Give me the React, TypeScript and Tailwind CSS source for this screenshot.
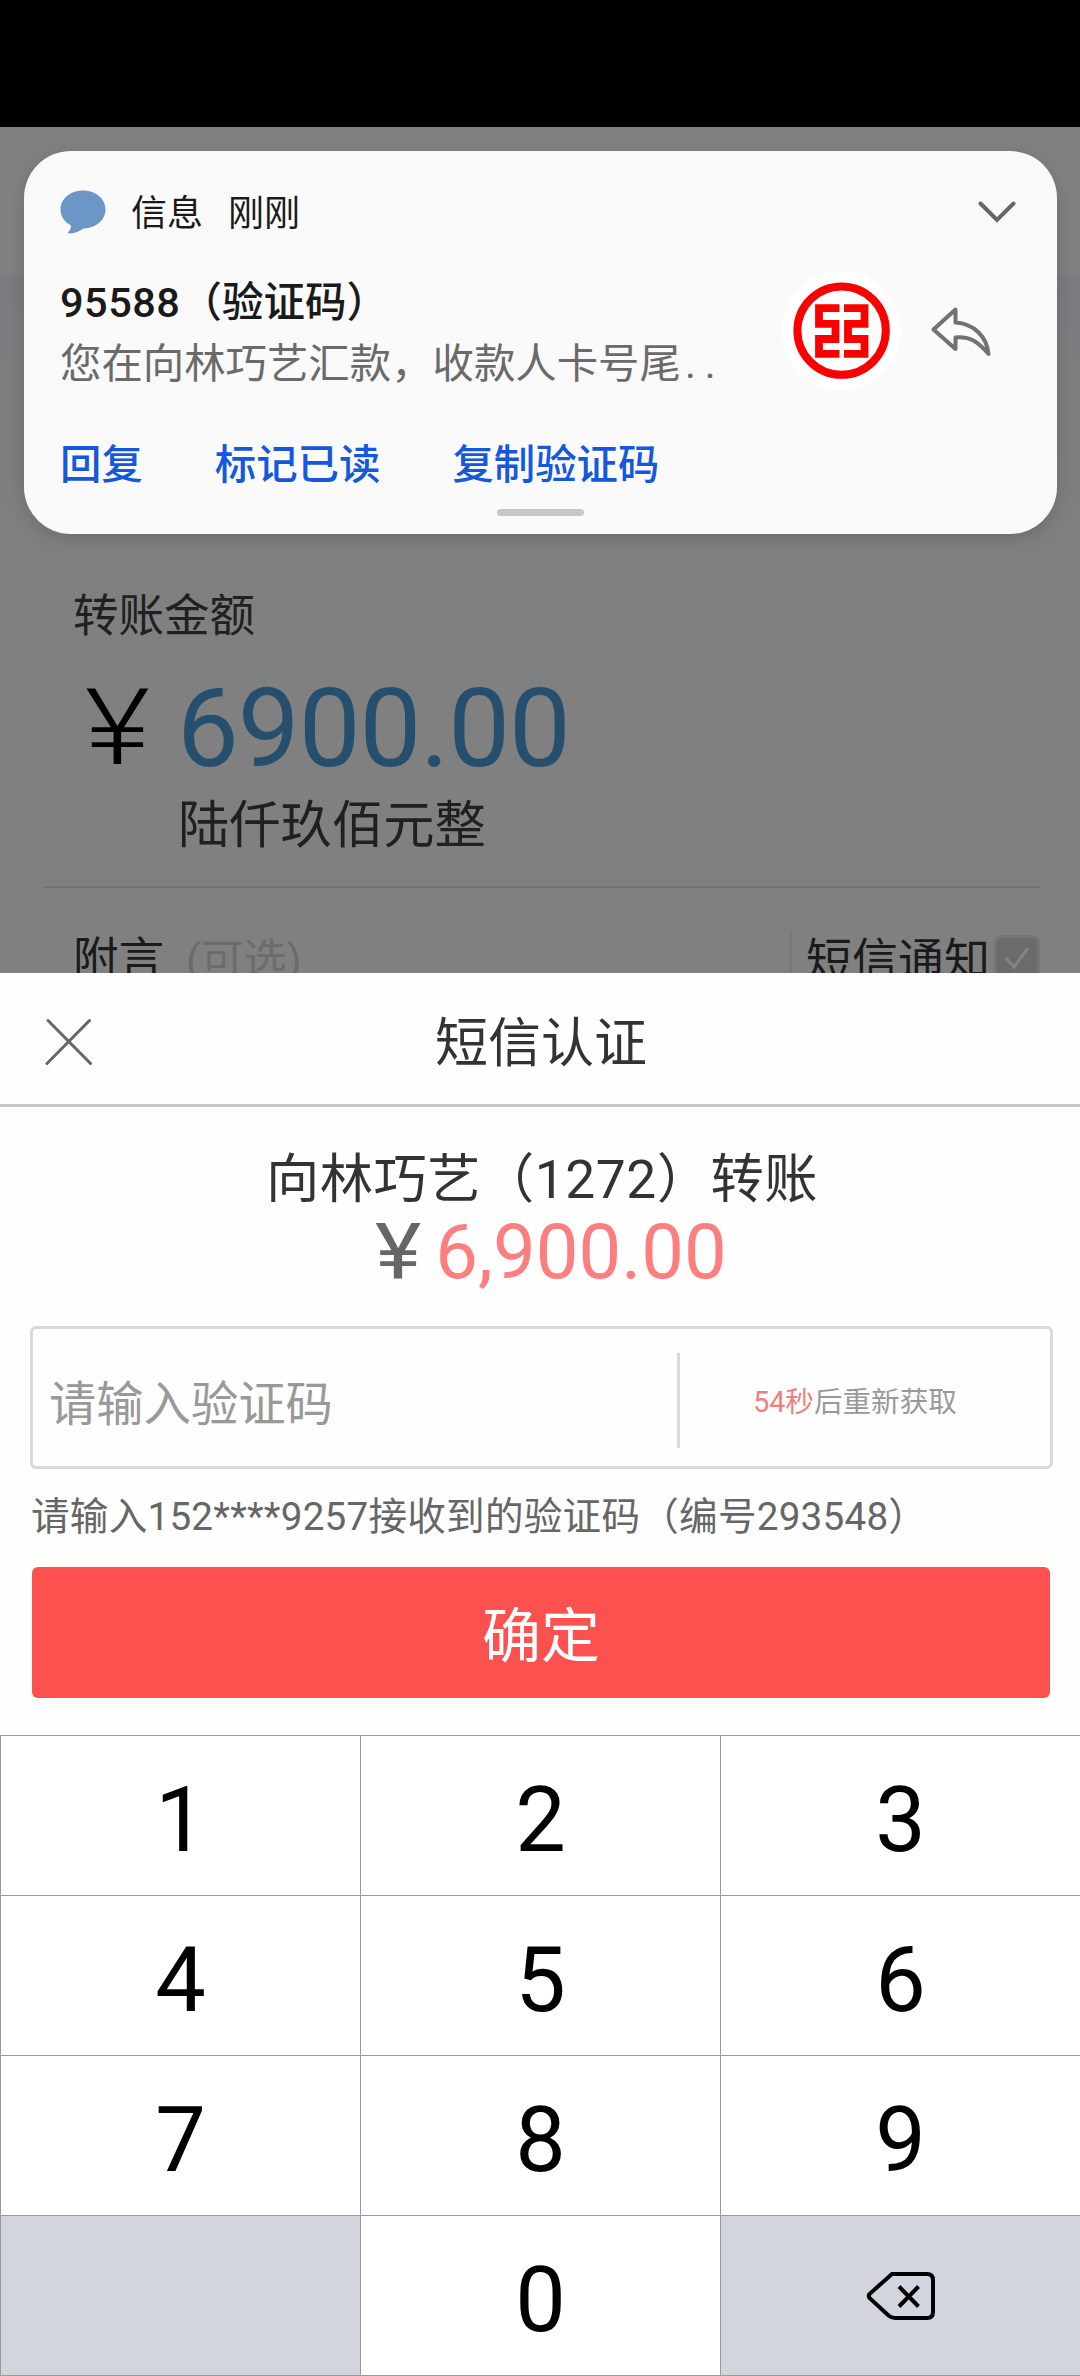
import type { ReactNode } from 'react';

function MessageIcon() {
  return (
    <svg width="46" height="44" viewBox="0 0 46 44" fill="#6b96c6">
      <path d="M23 0.500C35.700 0.500 45.500 9 45.500 19.500S36 38 23.500 38.500C19 41.500 14 43.500 9 43.500C7.500 43.500 7.500 42.800 8.500 41.800C10.300 39.800 11.200 37.800 11 35.500C4.500 32 0.500 26.500 0.500 19.500C0.500 9 10.300 0.500 23 0.500Z" />
    </svg>
  );
}

function ChevronIcon() {
  return (
    <svg width="38" height="22" viewBox="0 0 38 22" fill="none" stroke="#666666" strokeWidth="4" strokeLinecap="round">
      <path d="M2.500 2.500L19 19L35.500 2.500" />
    </svg>
  );
}

function BankLogo() {
  return (
    <svg width="119" height="119" viewBox="0 0 119 119">
      <circle cx="59.500" cy="59.500" r="59.500" fill="#ffffff" />
      <g fill="none" stroke="#fb0000">
        <circle cx="59.600" cy="59.600" r="44.200" strokeWidth="8" />
        <path strokeWidth="7.800" d="M57.500 37.200H37V52.800H53.500V68H37V82.800H57.500" />
        <path strokeWidth="7.800" d="M62 37.200H82.500V52.800H66V68H82.500V82.800H62" />
      </g>
    </svg>
  );
}

function ReplyIcon() {
  return (
    <svg width="60" height="50" viewBox="0 0 60 50" fill="none" stroke="#707273" strokeWidth="4" strokeLinejoin="round">
      <path d="M24.500 2.500L2.500 22.500L24.500 42V30.500C40 29 48 36 57.500 47C56 30 43 16.500 24.500 15.500Z" />
    </svg>
  );
}

function CloseIcon() {
  return (
    <svg width="48" height="48" viewBox="0 0 48 48" fill="none" stroke="#666666" strokeWidth="3" strokeLinecap="round">
      <path d="M3 2.500L45.500 45.500M44.500 2.500L2 45.500" />
    </svg>
  );
}

function BackspaceIcon() {
  return (
    <svg width="70" height="50" viewBox="0 0 70 50" fill="none" stroke="#000000" strokeWidth="4">
      <path d="M26 3H61Q67 3 67 9V41Q67 47 61 47H29Q25.500 47 22.500 44.500L3.500 27Q2 25 3.500 23Z" />
      <path d="M33 15.500L52.500 35.500M52.500 15.500L33 35.500" />
    </svg>
  );
}

const actions = ['回复', '标记已读', '复制验证码'];

function Notification() {
  return (
    <div className="absolute left-6 top-[151px] flex h-[383px] w-[1033px] flex-col rounded-[47px] bg-[#fafafa] pl-9 shadow-[0_4px_16px_rgba(0,0,0,0.14)]">
      <div className="mt-[36px] flex h-[50px] items-center pr-[41px] text-[36px] leading-[50px] text-[#1a1a1a]">
        <MessageIcon />
        <span className="ml-[25px] pt-1">信息</span>
        <span className="ml-[25px] pt-1">刚刚</span>
        <span className="ml-auto">
          <ChevronIcon />
        </span>
      </div>
      <div className="mt-[34px] flex h-[122px] items-start">
        <div className="w-[720px] pt-px">
          <div className="text-[41.500px] font-medium leading-[62px] text-[#1a1a1a]">
            <span className="tracking-[0.500px]">95588</span>（验证码）
          </div>
          <div className="whitespace-nowrap text-[41.400px] leading-[60px] text-[#6a6a6a]">
            您在向林巧艺汇款，收款人卡号尾<span className="ml-1 tracking-[9px]">..</span>
          </div>
        </div>
        <div className="ml-[2px]">
          <BankLogo />
        </div>
        <div className="ml-[30px] mt-[36px]">
          <ReplyIcon />
        </div>
      </div>
      <div className="mt-[42px] flex h-[60px] gap-[72px] text-[41.400px] font-medium leading-[60px] text-[#1458de]">
        {actions.map((label) => (
          <span key={label}>{label}</span>
        ))}
      </div>
      <div className="ml-[437px] mt-[14px] h-[7px] w-[87px] rounded-full bg-[#c7c7c7]" />
    </div>
  );
}

function TransferPage() {
  return (
    <div className="h-[846px] overflow-hidden bg-[#808080] text-[#202020]">
      <div className="h-[149px]" />
      <div className="h-[697px] bg-linear-to-b from-[#7a7b7e] via-[#808080] via-50% to-[#808080] pt-[311px]">
        <div className="ml-[73px] text-[45.500px] leading-[60px]">转账金额</div>
        <div className="ml-[85px] mt-[22px] flex h-[120px] items-center leading-[120px]">
          <span className="w-[92px] origin-left scale-x-120 text-[105px] font-light text-black">¥</span>
          <span className="text-[110px] tracking-[-1px] text-[#264f6d]">6900.00</span>
        </div>
        <div className="ml-[178px] mt-[2px] text-[51.300px] leading-[70px]">陆仟玖佰元整</div>
        <div className="ml-[43px] mt-[25px] h-[2px] w-[997px] bg-[#737373]" />
        <div className="ml-[73px] mt-[42px] flex h-[60px] w-[967px] items-start text-[45.500px] leading-[60px] text-[#1a1a1a]">
          <span>附言</span>
          <span className="ml-[22px] text-[43px] text-[#6c6c6c]">(可选)</span>
          <span className="ml-auto h-[60px] w-[2px] bg-[#777777]" />
          <span className="ml-[14px] text-[46px]">短信通知</span>
          <span className="ml-[4px] mt-[5px] flex h-[45px] w-[46px] items-center justify-center rounded-[8px] border-3 border-[#747474] bg-[#6b6b6b]">
            <svg width="26" height="24" viewBox="0 0 26 24" fill="none" stroke="#838383" strokeWidth="3">
              <path d="M2 12L10 21L24 2" />
            </svg>
          </span>
        </div>
      </div>
    </div>
  );
}

function Key({ children, muted }: { children?: ReactNode; muted?: boolean }) {
  return (
    <div
      className={`flex items-center justify-center border-r border-b border-[#9a9a9a] text-[90px] leading-none text-black ${
        muted ? 'bg-[#d2d5dd]' : 'bg-white pt-[11px]'
      }`}
    >
      {children}
    </div>
  );
}

function Keypad() {
  return (
    <div className="grid h-[641px] w-[1081px] grid-cols-[360px_360px_360px] grid-rows-4 border-t border-l border-[#9a9a9a]">
      {[1, 2, 3, 4, 5, 6, 7, 8, 9].map((n) => (
        <Key key={n}>{n}</Key>
      ))}
      <Key muted />
      <Key>0</Key>
      <Key muted>
        <BackspaceIcon />
      </Key>
    </div>
  );
}

function SmsSheet() {
  return (
    <div className="h-[762px] bg-[#fefefe]">
      <div className="flex h-[134px] items-center border-b-3 border-[#c4c6c8] pl-[45px] pt-[7px] text-[53px] text-[#333333]">
        <CloseIcon />
        <span className="flex-1 pr-[91px] pt-[3px] text-center leading-[80px]">短信认证</span>
      </div>
      <div className="pl-[4px] pt-[37px] text-center text-[53.300px] leading-[72px] tracking-[0.500px] text-[#333333]">
        向林巧艺（1272）转账
      </div>
      <div className="mr-[-22px] mt-[-1px] flex h-[74px] justify-center gap-[19px] leading-[74px]">
        <span className="origin-left scale-x-113 text-[78px] text-[#666666]">¥</span>
        <span className="text-[76px] text-[#fd7e7e]">6,900.00</span>
      </div>
      <div className="ml-[30px] mt-[37px] flex h-[143px] w-[1023px] items-center rounded-[6px] border-3 border-[#d9d9d9] pt-[5px]">
        <span className="w-[644px] pl-[16px] pt-[10px] text-[47.300px] leading-[70px] text-[#999999]">请输入验证码</span>
        <span className="h-[95px] w-[3px] bg-[#d9d9d9]" />
        <span className="flex-1 pr-[20px] pt-[3px] text-center text-[28.600px] leading-[40px] text-[#999999]">
          <span className="text-[#ef7f7c]">54秒</span>后重新获取
        </span>
      </div>
      <div className="ml-[31px] mt-[18px] text-[38.600px] leading-[60px] tracking-[0.250px] text-[#666666]">
        请输入152****9257接收到的验证码（编号293548）
      </div>
      <div className="ml-[32px] mt-[20px] flex h-[131px] w-[1018px] items-center justify-center rounded-[6px] bg-[#fd5150] pt-[7px] text-[59px] leading-none text-white">
        确定
      </div>
    </div>
  );
}

export default function App() {
  return (
    <div className="relative h-[2376px] w-[1080px] overflow-hidden bg-white font-['Roboto','Noto_Sans_CJK_SC',sans-serif]">
      <div className="h-[127px] bg-black" />
      <TransferPage />
      <SmsSheet />
      <Keypad />
      <Notification />
    </div>
  );
}
